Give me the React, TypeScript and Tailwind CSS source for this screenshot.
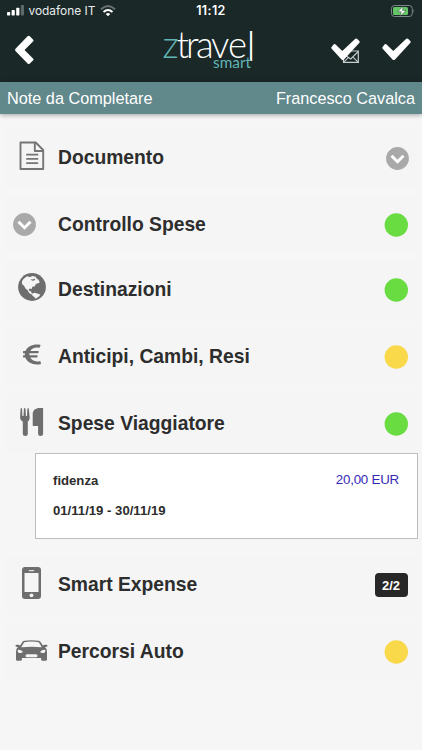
import type { ReactNode } from 'react';
import clsx from 'clsx';
import { FaEuroSign } from 'react-icons/fa';

interface Sezione {
  titolo: string;
  icona: ReactNode;
  iconClass: string;
  rowClass: string;
  stato: ReactNode;
  dettaglio?: ReactNode;
}

function DocumentIcon() {
  return (
    <svg width="26" height="30" viewBox="0 0 26 30" fill="none" stroke="#757575" strokeWidth="1.9" strokeLinejoin="round">
      <path d="M1.500 1.500h15.200l7.500 7.500v19H1.500z" />
      <path d="M15.800 1.800v8.200h8.400" />
      <path d="M7.200 13.600h12M7.200 17.900h12M7.200 22.200h12" strokeWidth="1.700" />
    </svg>
  );
}

function ChevronCircle() {
  return (
    <svg width="23" height="23" viewBox="0 0 23 23">
      <circle cx="11.5" cy="11.5" r="11.4" fill="#a9a9a9" />
      <path d="M5.500 8.700l6 6 6-6" fill="none" stroke="#fff" strokeWidth="3" />
    </svg>
  );
}

function GlobeIcon() {
  return (
    <svg width="28" height="28" viewBox="0 0 28 28">
      <circle cx="14" cy="14" r="13.9" fill="#6e6e6e" />
      <path
        d="M4 8.200C5.300 6 7.400 4.100 9.600 3.300l2.400.9 2.200-1.300 3.500.8 1.100 2 1.400.9 1.700 2.600-2.300 1.300-1.800.5-.9 2.200-2.600.6-.5 2.200-2-.4-1 1 .5 1.400 1.700.3.500 1.700 1.700 1-.9.700-3.200-1.700-1.400-2.700-2.200-1.900-1.500-2.700-2-1.600z"
        fill="#f5f5f5"
      />
      <path d="M12.800 5.900l2.200.7 1.500-1 .7 1.200-1.700 1-1.700-.4z" fill="#6e6e6e" />
      <path d="M14.300 20.700l2.300-.9 2.700.7 2.900 1-.9 1.800-3.700 2.500-1.300-1.800-1.900-1.300z" fill="#f5f5f5" />
    </svg>
  );
}

function CutleryIcon() {
  return (
    <svg width="24" height="30" viewBox="0 0 24 30" fill="#6e6e6e">
      <path d="M.6 1.800Q1.300.4 2 1.800l.4 7.300h1.100l.4-7.300q.8-1.400 1.600 0l.4 7.300H7l.4-7.300q.7-1.400 1.400 0l.9 8.700c0 2.200-.9 3.300-1.900 4v12.400q0 2.100-2.500 2.100t-2.500-2.100V14.500C1.500 13.800.1 12.700.1 10.500z" />
      <path d="M12.700 7c0-3.700 3-6 6.800-6h3.600v25.900q0 2.100-2.500 2.100t-2.500-2.100v-8h-4.500q-.9 0-.9-1z" />
    </svg>
  );
}

function PhoneIcon() {
  return (
    <svg width="19" height="32" viewBox="0 0 19 32">
      <rect width="19" height="32" rx="3" fill="#6e6e6e" />
      <rect x="2.500" y="6" width="14" height="19" fill="#f5f5f5" />
      <rect x="6.700" y="3" width="5.600" height="1.200" rx=".6" fill="#e0e0e0" />
      <circle cx="9.500" cy="28.300" r="1.900" fill="#f5f5f5" />
    </svg>
  );
}

function CarIcon() {
  return (
    <svg width="33" height="21" viewBox="0 0 33 21">
      <path
        d="M.4 5.600c0-1 3.700-1.100 4.700-.1L7.800 1.600Q8.300.9 9.300.7q7.200-1 14.400 0 1 .2 1.500.9l2.700 3.900c1-1 4.700-.9 4.700.1 0 1.100-1.500 1.500-2.800 1.500 1.800 1.300 2.200 3.100 2.200 5.300v7q0 1.300-1.300 1.300h-3.300q-1.300 0-1.300-1.300v-1.500H6.900v1.500q0 1.300-1.300 1.300H2.300Q1 20.700 1 19.400v-7c0-2.200.4-4 2.200-5.300C1.900 7.100.4 6.700.4 5.600z"
        fill="#6e6e6e"
      />
      <path d="M6.200 7.200l3-5q7.300-1.300 14.600 0l3 5q-10.300-1-20.600 0z" fill="#f5f5f5" />
      <path d="M2.800 9.700q3.500-.2 5.200 2.200-1.500 1.500-4.400.9-1.400-1-.8-3.100zM30.200 9.700q-3.500-.2-5.200 2.200 1.500 1.500 4.400.9 1.400-1 .8-3.100z" fill="#f5f5f5" />
      <rect x="10.500" y="14.300" width="12" height="3" rx="1.500" fill="#f5f5f5" />
    </svg>
  );
}

function Dot({ color }: { color: 'green' | 'yellow' }) {
  return (
    <svg className="mr-2" width="24" height="24" viewBox="0 0 24 24">
      <circle cx="12.300" cy="12" r="11.700" fill={color === 'green' ? '#69dc42' : '#f9d84a'} />
    </svg>
  );
}

function Check() {
  return <path d="M4.300 6.300l7 6.600L24.300.8q1-.8 2 .2l2 2q.9 1-.1 2L13 21.500q-1.300 1.100-2.500 0L.7 10.800q-.9-1 .1-2l1.700-2.300q.8-.9 1.800-.2z" fill="#fff" />;
}

const sezioni: Sezione[] = [
  {
    titolo: 'Documento',
    icona: <DocumentIcon />,
    iconClass: 'justify-center pb-1',
    rowClass: 'h-[62px] pt-0.5',
    stato: <div className="mr-[7px]"><ChevronCircle /></div>,
  },
  {
    titolo: 'Controllo Spese',
    icona: <ChevronCircle />,
    iconClass: 'pl-[7px]',
    rowClass: 'h-14 pt-px',
    stato: <Dot color="green" />,
  },
  {
    titolo: 'Destinazioni',
    icona: <GlobeIcon />,
    iconClass: 'justify-center pb-1.5',
    rowClass: 'h-[60px]',
    stato: <Dot color="green" />,
  },
  {
    titolo: 'Anticipi, Cambi, Resi',
    icona: <FaEuroSign className="h-[23px] w-[18px] text-[#6e6e6e]" preserveAspectRatio="none" />,
    iconClass: 'justify-center pb-1.5',
    rowClass: 'h-[58px]',
    stato: <Dot color="yellow" />,
  },
  {
    titolo: 'Spese Viaggiatore',
    icona: <CutleryIcon />,
    iconClass: 'justify-center pb-1',
    rowClass: 'h-[59px] pt-px',
    stato: <Dot color="green" />,
    dettaglio: (
      <div className="mr-[-2px] mb-[9px] ml-[29px] flex h-[86px] items-start justify-between border border-[#bdbdbd] bg-white px-[17px] pt-[17px] text-[13.150px]">
        <div className="font-bold text-[#2d2d2d]">
          <p className="leading-5">fidenza</p>
          <p className="mt-2.5 leading-5">01/11/19 - 30/11/19</p>
        </div>
        <span className="mr-px text-[13.300px] leading-[17px] tracking-[-0.200px] text-[#3329b4]">20,00 EUR</span>
      </div>
    ),
  },
  {
    titolo: 'Smart Expense',
    icona: <PhoneIcon />,
    iconClass: 'justify-center pr-0.5 pb-1',
    rowClass: 'h-[58px]',
    stato: (
      <span className="mr-[8.500px] flex h-6 w-[33px] items-center justify-center rounded bg-[#272727] pt-px text-[13px] font-bold text-white">
        2/2
      </span>
    ),
  },
  {
    titolo: 'Percorsi Auto',
    icona: <CarIcon />,
    iconClass: 'justify-center pr-0.5 pb-[3px]',
    rowClass: 'h-[60px]',
    stato: <Dot color="yellow" />,
  },
];

function StatusBar() {
  return (
    <div className="grid h-[22px] grid-cols-3 items-center px-[7px] font-['Inter',sans-serif] text-[12.500px] text-[#e8ecec]">
      <div className="flex items-center whitespace-nowrap">
        <svg width="18" height="11" viewBox="0 0 18 11" fill="#fff">
          <rect y="7" width="3.200" height="3.500" rx=".7" />
          <rect x="4.600" y="5" width="3.200" height="5.500" rx=".7" />
          <rect x="9.200" y="2.700" width="3.200" height="7.800" rx=".7" />
          <rect x="13.800" width="3.200" height="10.500" rx=".7" opacity=".3" />
        </svg>
        <span className="ml-[3.500px] text-[11.900px]">vodafone IT</span>
        <svg className="ml-[5px]" width="16" height="12" viewBox="0 0 16 12" fill="none" stroke="#fff" strokeWidth="1.900">
          <path d="M1 4.300Q8-2.200 15 4.300" opacity=".35" />
          <path d="M3.500 7Q8 3 12.500 7" />
          <path d="M8 11.300L5.700 9Q8 7.200 10.300 9z" fill="#fff" stroke="none" />
        </svg>
      </div>
      <span className="text-center font-semibold tracking-[0.400px] text-white">11:12</span>
      <svg className="justify-self-end" width="24" height="12" viewBox="0 0 24 12">
        <rect x=".5" y=".5" width="20.800" height="11" rx="3" fill="none" stroke="#7d8686" />
        <rect x="2" y="2" width="15" height="8" rx="1.500" fill="#65c466" />
        <path d="M22.500 4q1.500 2 0 4z" fill="#7d8686" />
        <path d="M12.300 1.200L6.800 6.700h3.500L9.300 11l5.700-5.600h-3.600z" fill="#fff" stroke="#1b2828" strokeWidth=".4" />
      </svg>
    </div>
  );
}

function Logo() {
  return (
    <svg className="overflow-visible" width="92" height="50" viewBox="0 0 92 50" fontFamily="Lato, sans-serif" fontWeight="300">
      <text y="33" fontSize="36.500" fill="#fff">
        <tspan x="-1.500" fill="#62b4b5">z</tspan>
        <tspan x="12.500 22 32 47 64">trave</tspan>
        <tspan x="82.500" y="36" fontSize="41">l</tspan>
      </text>
      <text x="49" y="42.500" fontSize="15" fill="#62b4b5" fontWeight="400" textLength="38" lengthAdjust="spacingAndGlyphs">smart</text>
    </svg>
  );
}

export default function App() {
  return (
    <div className="h-[750px] w-[422px] overflow-hidden bg-[#f6f6f6] font-['Liberation_Sans',Arial,sans-serif]">
      <header className="h-[82px] bg-[#1b2828]">
        <StatusBar />
        <div className="flex h-[56px] items-center pr-[11px] pl-[15px]">
          <svg width="20" height="30" viewBox="0 0 20 30">
            <path d="M.7 13.500L12.600 1.300q1.100-1 2.200 0l3.200 3.100q1 1.100 0 2.200L9.500 14.900l8.500 8.500q1 1.100 0 2.200l-3.200 3q-1.100 1-2.200 0L.7 16.300q-1.200-1.400 0-2.800z" fill="#fff" />
          </svg>
          <div className="ml-[129px] flex-1"><Logo /></div>
          <svg className="mt-0.5" width="80" height="28" viewBox="0 0 80 28">
            <path d="M12.500 14h14.800v11.300H12.500z" fill="none" stroke="#c6cccc" strokeWidth="1.200" />
            <path d="M12.500 25.300l5-5M27.300 25.300l-5-5M14 18l5.700 4 7.600-7.500" fill="none" stroke="#c6cccc" strokeWidth="1.100" />
            <g transform="translate(0 1)"><Check /></g>
            <g transform="translate(51 1)"><Check /></g>
          </svg>
        </div>
      </header>

      <div className="flex h-8 items-center justify-between bg-[#61888b] px-[7px] text-[16.250px] text-white shadow-[0_1px_5px_rgba(0,0,0,0.35)]">
        <span>Note da Completare</span>
        <span>Francesco Cavalca</span>
      </div>

      <main className="mt-3 flex flex-col gap-2 px-1.5">
        {sezioni.map((s) => (
          <section key={s.titolo}>
            <div className={clsx('flex items-center bg-[#f5f5f5]', s.rowClass)}>
              <div className={clsx('flex w-[52px] shrink-0 items-center', s.iconClass)}>{s.icona}</div>
              <h2 className="flex-1 text-[19.300px] leading-6 font-bold text-[#2d2d2d]">{s.titolo}</h2>
              {s.stato}
            </div>
            {s.dettaglio}
          </section>
        ))}
      </main>
    </div>
  );
}
